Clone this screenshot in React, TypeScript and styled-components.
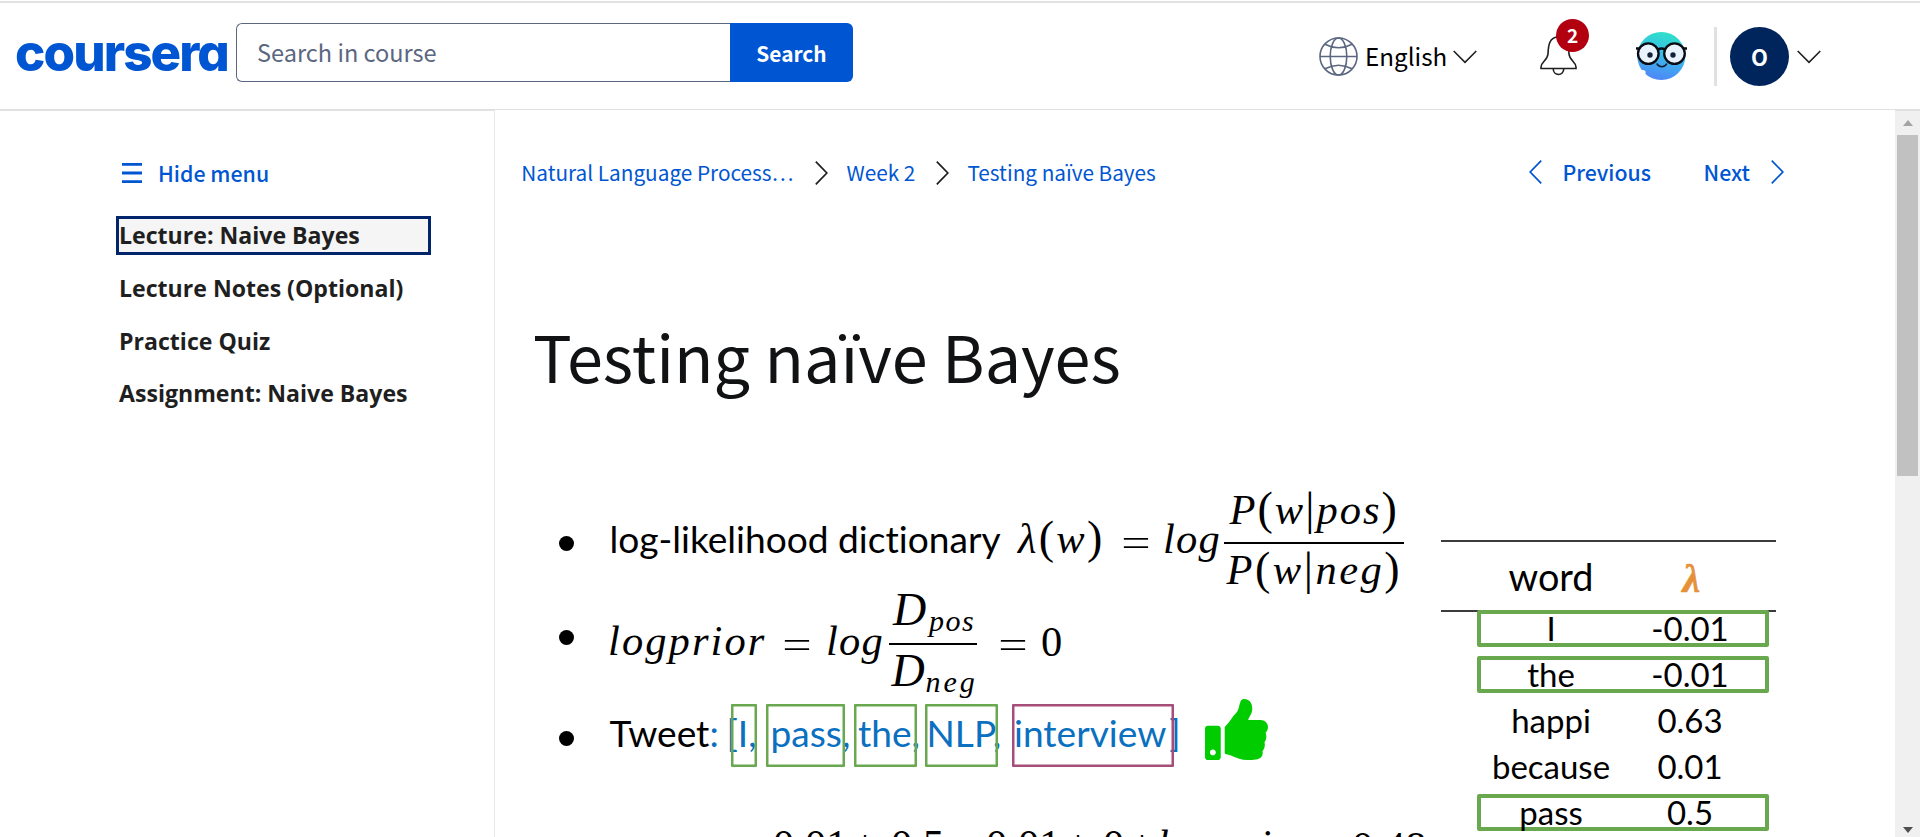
import React from 'react';
import styled, { createGlobalStyle } from 'styled-components';
import { FaThumbsUp } from 'react-icons/fa';

const ui = '"Noto Sans CJK JP", "Source Sans Pro", sans-serif';
const blue = '#0056d2';
const green = '#6aa84f';

const GlobalStyle = createGlobalStyle`
  * { box-sizing: border-box; }
  body { margin: 0; background: #fff; overflow: hidden; font-family: ${ui}; color: #1f1f1f; }
`;

const Page = styled.div`
  width: 1920px;
  height: 837px;
  overflow: hidden;
  display: flex;
  flex-direction: column;
  padding-top: 1px;
`;

/* ---------- header ---------- */

const Header = styled.header`
  flex: none;
  height: 109px;
  display: flex;
  align-items: center;
  border-top: 2px solid #e1e3e2;
  border-bottom: 1px solid #dfe1e1;
  padding-left: 15px;
`;

const Logo = styled.div`
  width: 221px;
  height: 60px;
  line-height: 53px;
  font-family: Inter, sans-serif;
  font-weight: 800;
  font-size: 51px;
  letter-spacing: -1.9px;
  font-feature-settings: 'cv11';
  color: ${blue};
  white-space: nowrap;
`;

const SearchForm = styled.div`
  display: flex;
  width: 617px;
  height: 59px;
  margin-bottom: 7px;
`;

const SearchField = styled.div`
  flex: 1;
  border: 1px solid #5b6780;
  border-right: 0;
  border-radius: 6px 0 0 6px;
  padding-left: 20px;
  font-size: 23.56px;
  line-height: 57px;
  color: #5b6780;
`;

const SearchButton = styled.div`
  width: 123px;
  border-radius: 0 6px 6px 0;
  background: ${blue};
  color: #fff;
  font-weight: 700;
  font-size: 20.84px;
  line-height: 60px;
  text-align: center;
`;

const Tools = styled.div`
  display: flex;
  align-items: center;
  margin-left: 466px;
  height: 60px;
`;

const Language = styled.div`
  display: flex;
  align-items: center;
  width: 221px;
  font-size: 24.2px;
  line-height: 60px;
  height: 60px;
  color: #000;
  svg:first-child { margin-right: 7px; }
  svg:last-child { margin: 2px 0 0 6px; }
`;

const Notifications = styled.div`
  position: relative;
  width: 96px;
  height: 40px;
`;

const Badge = styled.span`
  position: absolute;
  left: 16px;
  top: -17px;
  width: 33px;
  height: 33px;
  border-radius: 50%;
  background: #b30011;
  color: #fff;
  font-weight: 700;
  font-size: 19px;
  line-height: 32px;
  text-align: center;
`;

const Divider = styled.div`
  width: 3px;
  height: 59px;
  margin: 0 13px 0 27px;
  background: #e1e1e1;
`;

const Account = styled.div`
  width: 59px;
  height: 59px;
  margin-right: 8px;
  border-radius: 50%;
  background: #00255d;
  color: #fff;
  font-weight: 700;
  font-size: 22px;
  line-height: 59px;
  text-align: center;
  & + svg { margin-top: 2px; }
`;

/* ---------- body ---------- */

const Body = styled.div`
  flex: 1;
  min-height: 0;
  display: flex;
`;

const Sidebar = styled.aside`
  flex: none;
  width: 495px;
  border-right: 1px solid #e8e8e8;
  border-top: 1px solid #e1e3e2;
  padding: 42px 0 0 116px;
`;

const HideMenu = styled.div`
  display: flex;
  align-items: center;
  height: 40px;
  margin-bottom: 23px;
  padding-left: 6px;
  gap: 16px;
  color: ${blue};
  font-weight: 500;
  font-size: 21.36px;
  line-height: 40px;
`;

const LessonLink = styled.div<{ $active?: boolean }>`
  width: 315px;
  height: 39px;
  margin-bottom: 13.8px;
  border: 3px solid ${p => (p.$active ? '#00256b' : 'transparent')};
  background: ${p => (p.$active ? '#f5f5f5' : 'transparent')};
  font-family: 'Open Sans', sans-serif;
  font-weight: 700;
  font-size: 23.1px;
  line-height: 33px;
  white-space: nowrap;
`;

const Main = styled.main`
  flex: none;
  width: 1400px;
  padding-top: 42px;
`;

const TopBar = styled.nav`
  display: flex;
  align-items: center;
  height: 40px;
  padding: 0 111px 0 26.3px;
  font-size: 20.75px;
  line-height: 40px;
  color: ${blue};
  white-space: nowrap;
`;

const Crumb = styled.span<{ $gap?: number }>`
  margin-right: ${p => p.$gap ?? 0}px;
  svg { display: block; margin-top: 2px; }
`;

const Pager = styled.div`
  display: flex;
  align-items: center;
  margin-left: auto;
  font-weight: 500;
  font-size: 21.3px;
`;

const PagerLabel = styled.span<{ $left?: number; $right?: number }>`
  margin-left: ${p => p.$left ?? 0}px;
  margin-right: ${p => p.$right ?? 0}px;
`;

const Title = styled.h1`
  margin: 123px 0 98px 38px;
  font-weight: 400;
  font-size: 64.75px;
  line-height: 80px;
  color: #111214;
`;

const Slide = styled.section`
  display: flex;
  color: #000;
`;

const Points = styled.div`
  width: 882px;
  margin-left: 64px;
`;

const Point = styled.div<{ $h: number }>`
  display: flex;
  align-items: flex-start;
  height: ${p => p.$h}px;
`;

const Bullet = styled.div<{ $top: number; $w: number }>`
  flex: none;
  width: ${p => p.$w}px;
  padding-top: ${p => p.$top}px;
  &::before {
    content: '';
    display: block;
    width: 15px;
    height: 15px;
    border-radius: 50%;
    background: #000;
  }
`;

type Run = { $base: number; $size?: number; $w?: number; $ls?: number };

const Sans = styled.div<Run>`
  flex: none;
  width: ${p => (p.$w ? `${p.$w}px` : 'auto')};
  height: 40px;
  margin-top: ${p => p.$base - 20 - 0.387 * (p.$size ?? 37.12)}px;
  font-family: Lato, sans-serif;
  font-size: ${p => p.$size ?? 37.12}px;
  font-variant-ligatures: none;
  line-height: 40px;
  letter-spacing: ${p => p.$ls ?? 0}px;
  white-space: pre;
`;

const MathText = styled.div<Run & { $upright?: boolean }>`
  flex: none;
  width: ${p => (p.$w ? `${p.$w}px` : 'auto')};
  height: 40px;
  margin-top: ${p => p.$base - 20 - 0.3375 * (p.$size ?? 42.5)}px;
  font-family: 'Liberation Serif', serif;
  font-style: ${p => (p.$upright ? 'normal' : 'italic')};
  font-size: ${p => p.$size ?? 42.5}px;
  line-height: 40px;
  letter-spacing: ${p => p.$ls ?? 0}px;
  white-space: pre;
`;

const Up = styled.span`
  font-style: normal;
  font-size: 46px;
  line-height: 0;
`;

const Equals = styled.div<{ $base: number; $w: number }>`
  flex: none;
  width: ${p => p.$w}px;
  height: 40px;
  margin-top: ${p => p.$base - 35}px;
  span {
    display: block;
    width: 30px;
    font-family: Inter, sans-serif;
    font-weight: 200;
    font-size: 42px;
    line-height: 40px;
    text-align: center;
    transform: scaleX(1.55);
  }
`;

const Fraction = styled.div<{ $w: number; $top: number }>`
  flex: none;
  width: ${p => p.$w}px;
  display: grid;
  grid-template-rows: ${p => p.$top}px 2px 40px;
`;

const Part = styled.div<{ $pad: number }>`
  display: flex;
  align-items: flex-start;
  padding-left: ${p => p.$pad}px;
`;

const Bar = styled.div<{ $w: number }>`
  width: ${p => p.$w}px;
  background: #000;
`;

const Blue = styled.span`
  color: #0b70bf;
`;

const Closing = styled.span`
  margin-left: 3px;
`;

const Token = styled.div<{ $w: number; $gap: number; $shift: number; $color?: string }>`
  position: relative;
  flex: none;
  display: flex;
  width: ${p => p.$w}px;
  height: 63.5px;
  margin-top: 10.5px;
  margin-right: ${p => p.$gap}px;
  padding-left: ${p => Math.max(p.$shift, 0)}px;
  text-indent: ${p => Math.min(p.$shift, 0)}px;
  color: #0b70bf;
  &::after {
    content: '';
    position: absolute;
    inset: 0;
    box-shadow: inset 0 0 0 2.5px ${p => p.$color ?? green};
    border-radius: 1px;
  }
`;

const Thumb = styled(FaThumbsUp)`
  flex: none;
  width: 63px;
  height: 61px;
  margin: 6px 0 0 31px;
  color: #00cc00;
`;

const Table = styled.div`
  width: 335px;
  height: 320px;
  margin-top: 46.5px;
  font-family: Lato, sans-serif;
`;

const HeadRow = styled.div`
  display: grid;
  grid-template-columns: 140px 138px;
  height: 72.5px;
  margin-bottom: -2.5px;
  padding-left: 40px;
  border-top: 2px solid #3c3c3c;
  border-bottom: 2px solid #3c3c3c;
  font-size: 37.8px;
  line-height: 69px;
  text-align: center;
`;

const Lambda = styled.span`
  padding: 2px 0 0 3px;
  font-family: 'Liberation Serif', serif;
  font-style: italic;
  font-weight: 700;
  font-size: 40px;
  line-height: 69px;
  color: #e69138;
  -webkit-text-stroke: 0.6px #e69138;
`;

const DataRow = styled.div<{ $marked?: boolean }>`
  position: relative;
  display: grid;
  grid-template-columns: 140px 138px;
  width: 292px;
  height: 37.2px;
  margin: 0 0 9px 36px;
  border: 4px solid ${p => (p.$marked ? green : 'transparent')};
  border-radius: 2px;
  font-size: 33px;
  line-height: 29px;
  text-align: center;
`;

/* ---------- scrollbar ---------- */

const Scrollbar = styled.div`
  width: 25px;
  display: flex;
  flex-direction: column;
  align-items: center;
  background: #f0f0f0;
  border-top: 1px solid #dfe1e1;
  padding: 9px 0 4px;
`;

const Grip = styled.div`
  width: 21px;
  height: 341px;
  margin: 9px 0 auto;
  background: #c1c1c1;
`;

/* ---------- icons ---------- */

const ChevronDown = () => (
  <svg width="24" height="14" viewBox="0 0 24 14" fill="none" stroke="#1f1f1f" strokeWidth="1.6">
    <path d="M.7 1 12 12.3 23.3 1" />
  </svg>
);

const Angle = ({ color, left }: { color: string; left?: boolean }) => (
  <svg width="13" height="24" viewBox="0 0 13 24" fill="none" stroke={color} strokeWidth="1.7">
    <path d={left ? 'M12.2.7 1.2 12l11 11.3' : 'M.8.7 11.8 12 .8 23.3'} />
  </svg>
);

const Globe = () => (
  <svg width="39" height="39" viewBox="0 0 39 39" fill="none" stroke="#5b6780" strokeWidth="1.6">
    <circle cx="19.5" cy="19.5" r="18.5" />
    <ellipse cx="19.5" cy="19.5" rx="8.3" ry="18.5" />
    <path d="M1 19.5h37M6 7.2q13.5 7.2 27 0M6 31.8q13.5-7.2 27 0" />
  </svg>
);

const Bell = () => (
  <svg width="37" height="40" viewBox="0 0 37 40" fill="none" stroke="#1f1f1f" strokeWidth="1.6">
    <path d="M1 32.5V31C1 26 7.5 24.5 8 18 8.3 10 9 1 18.5 1S28.7 10 29 18C29.5 24.5 36 26 36 31v1.5Z" />
    <path d="M13.2 32.5c0 8 10.6 8 10.6 0" />
  </svg>
);

const Mascot = () => (
  <svg width="51" height="50" viewBox="0 0 51 50">
    <defs>
      <linearGradient id="face" x1=".6" y1="0" x2=".4" y2="1">
        <stop offset="0" stopColor="#2fe0c8" />
        <stop offset=".45" stopColor="#38bdea" />
        <stop offset="1" stopColor="#4f86f7" />
      </linearGradient>
    </defs>
    <circle cx="25.3" cy="25" r="24" fill="url(#face)" />
    <circle cx="7" cy="41.5" r="2.6" fill="#fff" />
    <g fill="#e9f3fe" stroke="#0b0b12" strokeWidth="2.3">
      <circle cx="12.3" cy="22.6" r="10.3" />
      <circle cx="38.5" cy="22.6" r="10.3" />
    </g>
    <path d="M0 17.5h3.500M47.500 17.500H51M22 18.500q3.500-2 7 0" fill="none" stroke="#0b0b12" strokeWidth="2.6" />
    <circle cx="14" cy="24" r="2.7" fill="#14213a" />
    <circle cx="37" cy="24" r="2.7" fill="#14213a" />
    <path d="M20.8 32.5c2 4.300 8 4.300 10 0" fill="none" stroke="#14213a" strokeWidth="1.7" />
  </svg>
);

const Burger = () => (
  <svg width="20" height="20" viewBox="0 0 20 20" fill={blue}>
    <path d="M0 0h20v2.800H0zM0 8.600h20v2.800H0zM0 17.200h20V20H0z" />
  </svg>
);

const Arrow = ({ down }: { down?: boolean }) => (
  <svg width="10" height="6" viewBox="0 0 10 6" fill={down ? '#505050' : '#a3a3a3'}>
    <path d={down ? 'M0 0h10L5 6z' : 'M0 6h10L5 0z'} />
  </svg>
);

/* ---------- content ---------- */

const lessons = ['Lecture: Naive Bayes', 'Lecture Notes (Optional)', 'Practice Quiz', 'Assignment: Naive Bayes'];

const words = [
  { word: 'I', value: '-0.01', marked: true },
  { word: 'the', value: '-0.01', marked: true },
  { word: 'happi', value: '0.63' },
  { word: 'because', value: '0.01' },
  { word: 'pass', value: '0.5', marked: true },
];

export default function App() {
  return (
    <Page>
      <GlobalStyle />
      <Header>
        <Logo>coursera</Logo>
        <SearchForm>
          <SearchField>Search in course</SearchField>
          <SearchButton>Search</SearchButton>
        </SearchForm>
        <Tools>
          <Language>
            <Globe />
            English
            <ChevronDown />
          </Language>
          <Notifications>
            <Bell />
            <Badge>2</Badge>
          </Notifications>
          <Mascot />
          <Divider />
          <Account>O</Account>
          <ChevronDown />
        </Tools>
      </Header>
      <Body>
        <Sidebar>
          <HideMenu>
            <Burger />
            Hide menu
          </HideMenu>
          {lessons.map((name, i) => (
            <LessonLink key={name} $active={i === 0}>{name}</LessonLink>
          ))}
        </Sidebar>
        <Main>
          <TopBar>
            <Crumb $gap={21.5}>Natural Language Process…</Crumb>
            <Crumb $gap={18.6}><Angle color="#1f1f1f" /></Crumb>
            <Crumb $gap={20.5}>Week 2</Crumb>
            <Crumb $gap={18.6}><Angle color="#1f1f1f" /></Crumb>
            <Crumb>Testing naïve Bayes</Crumb>
            <Pager>
              <Angle color={blue} left />
              <PagerLabel $left={20.5} $right={52.5}>Previous</PagerLabel>
              <PagerLabel $right={21}>Next</PagerLabel>
              <Angle color={blue} />
            </Pager>
          </TopBar>
          <Title>Testing naïve Bayes</Title>
          <Slide>
            <Points>
              <Point $h={100}>
                <Bullet $top={43} $w={50.5} />
                <Sans $base={60.2} $w={408.5}>log-likelihood dictionary</Sans>
                <MathText $base={60} $w={103} $ls={2.3}>λ<Up>(</Up>w<Up>)</Up></MathText>
                <Equals $base={61.5} $w={42}><span>=</span></Equals>
                <MathText $base={60} $w={61} $ls={1.2}>log</MathText>
                <Fraction $w={180} $top={49}>
                  <Part $pad={5.5}><MathText $base={31} $ls={2}>P<Up>(</Up>w<Up>|</Up>pos<Up>)</Up></MathText></Part>
                  <Bar $w={180} />
                  <Part $pad={2.5}><MathText $base={40} $ls={2.5}>P<Up>(</Up>w<Up>|</Up>neg<Up>)</Up></MathText></Part>
                </Fraction>
              </Point>
              <Point $h={100}>
                <Bullet $top={36.5} $w={49} />
                <MathText $base={62} $w={174} $ls={2.1}>logprior</MathText>
                <Equals $base={63.5} $w={44}><span>=</span></Equals>
                <MathText $base={62} $w={63} $ls={1.2}>log</MathText>
                <Fraction $w={109} $top={50}>
                  <Part $pad={4}>
                    <MathText $base={33} $size={46} $w={36}>D</MathText>
                    <MathText $base={38} $size={30} $ls={1.5}>pos</MathText>
                  </Part>
                  <Bar $w={88} />
                  <Part $pad={2.5}>
                    <MathText $base={42} $size={46} $w={34}>D</MathText>
                    <MathText $base={47} $size={30} $ls={3}>neg</MathText>
                  </Part>
                </Fraction>
                <Equals $base={64} $w={43}><span>=</span></Equals>
                <MathText $base={63} $upright>0</MathText>
              </Point>
              <Point $h={124}>
                <Bullet $top={37.5} $w={50.5} />
                <Sans $base={54.5} $w={121}>Tweet<Blue>:</Blue></Sans>
                <Token $w={26.5} $gap={8.5} $shift={-4}><Sans $base={44}>[I,</Sans></Token>
                <Token $w={79.5} $gap={8.5} $shift={5}><Sans $base={44}>pass,</Sans></Token>
                <Token $w={63.5} $gap={8} $shift={4.5}><Sans $base={44}>the,</Sans></Token>
                <Token $w={73} $gap={14} $shift={1.5}><Sans $base={44}>NLP,</Sans></Token>
                <Token $w={162} $gap={0} $shift={2} $color="#a64d79">
                  <Sans $base={44}>interview<Closing>]</Closing></Sans>
                </Token>
                <Thumb preserveAspectRatio="none" />
              </Point>
              <Point $h={20}>
                <Bullet as="div" $top={100} $w={214} />
                <MathText $base={42} $upright $w={80}>0.01</MathText>
                <MathText $base={42} $upright $w={38}>+</MathText>
                <MathText $base={42} $upright $w={95}>0.5 −</MathText>
                <MathText $base={42} $upright $w={80}>0.01</MathText>
                <MathText $base={42} $upright $w={37}>+</MathText>
                <MathText $base={42} $upright $w={27}>0</MathText>
                <MathText $base={42} $upright $w={27}>+</MathText>
                <MathText $base={42} $ls={2.1} $w={160}>logprior</MathText>
                <MathText $base={44} $upright $w={35}>=</MathText>
                <MathText $base={44} $upright>0.48</MathText>
              </Point>
            </Points>
            <Table>
              <HeadRow>
                <span>word</span>
                <Lambda>λ</Lambda>
              </HeadRow>
              {words.map(row => (
                <DataRow key={row.word} $marked={row.marked}>
                  <span>{row.word}</span>
                  <span>{row.value}</span>
                </DataRow>
              ))}
            </Table>
          </Slide>
        </Main>
        <Scrollbar>
          <Arrow />
          <Grip />
          <Arrow down />
        </Scrollbar>
      </Body>
    </Page>
  );
}
